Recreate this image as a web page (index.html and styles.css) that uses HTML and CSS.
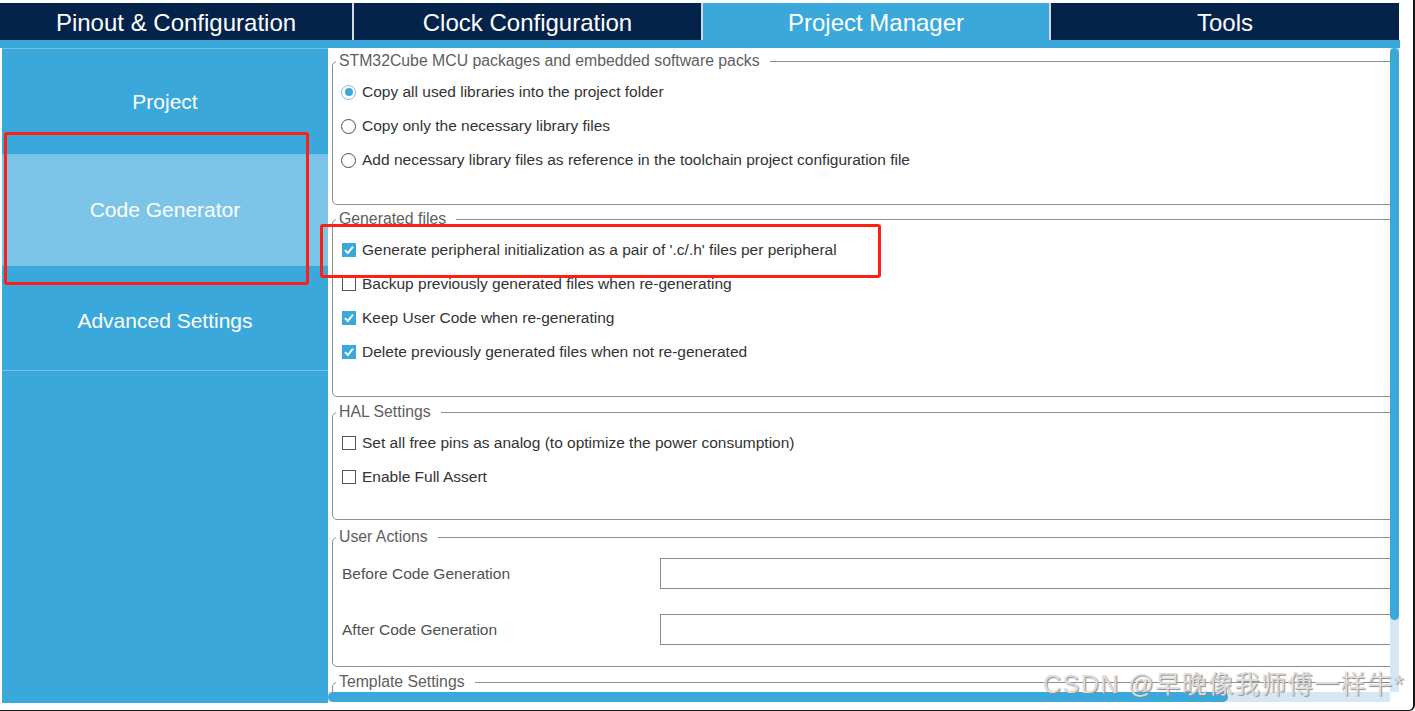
FILE: index.html
```html
<!DOCTYPE html>
<html lang="en">
<head>
    <meta charset="UTF-8">
    <meta name="viewport" content="width=device-width, initial-scale=1.0">
    <title>Project Manager - Code Generator</title>
    <link rel="stylesheet" href="styles.css">
</head>
<body>

    <div class="frame">
        <nav class="tabs">
            <div class="tab">Pinout &amp; Configuration</div>
            <div class="tab">Clock Configuration</div>
            <div class="tab active">Project Manager</div>
            <div class="tab">Tools</div>
        </nav>
        <div class="band"></div>

        <div class="main">
            <aside class="sidebar">
                <div class="nav-item">Project</div>
                <div class="nav-item active">Code Generator</div>
                <div class="nav-item last">Advanced Settings</div>
            </aside>

            <section class="panel">
                <div class="viewport">
                    <fieldset class="group first">
                        <legend>STM32Cube MCU packages and embedded software packs</legend>
                        <label class="option"><span class="radio on"></span>Copy all used libraries into the project folder</label>
                        <label class="option"><span class="radio"></span>Copy only the necessary library files</label>
                        <label class="option"><span class="radio"></span>Add necessary library files as reference in the toolchain project configuration file</label>
                    </fieldset>

                    <fieldset class="group">
                        <legend>Generated files</legend>
                        <label class="option"><span class="check on"><svg viewBox="0 0 13 13"><polyline points="2.8,6.6 5.4,9.3 10.2,3.4"/></svg></span>Generate peripheral initialization as a pair of '.c/.h' files per peripheral</label>
                        <label class="option"><span class="check"></span>Backup previously generated files when re-generating</label>
                        <label class="option"><span class="check on"><svg viewBox="0 0 13 13"><polyline points="2.8,6.6 5.4,9.3 10.2,3.4"/></svg></span>Keep User Code when re-generating</label>
                        <label class="option"><span class="check on"><svg viewBox="0 0 13 13"><polyline points="2.8,6.6 5.4,9.3 10.2,3.4"/></svg></span>Delete previously generated files when not re-generated</label>
                    </fieldset>

                    <fieldset class="group hal">
                        <legend>HAL Settings</legend>
                        <label class="option"><span class="check"></span>Set all free pins as analog (to optimize the power consumption)</label>
                        <label class="option"><span class="check"></span>Enable Full Assert</label>
                    </fieldset>

                    <fieldset class="group actions">
                        <legend>User Actions</legend>
                        <div class="field">
                            <span class="field-label">Before Code Generation</span>
                            <input type="text" class="field-input">
                        </div>
                        <div class="field">
                            <span class="field-label">After Code Generation</span>
                            <input type="text" class="field-input">
                        </div>
                    </fieldset>

                    <fieldset class="group template">
                        <legend>Template Settings</legend>
                    </fieldset>
                </div>
                <div class="vscroll"><div class="thumb"></div></div>
                <div class="hscroll"><div class="thumb"></div></div>
                <div class="corner"></div>
            </section>
        </div>

        <!-- annotation boxes from the screenshot -->
        <div class="mark mark-nav"></div>
        <div class="mark mark-option"></div>
        <div class="watermark">CSDN @早晚像我师傅一样牛*</div>
    </div>

</body>
</html>
```

FILE: styles.css
```css
body {
    margin: 0;
    background-color: white;
    font-family: "Liberation Sans", Arial, sans-serif;
}
.frame {
    position: relative;
    width: 1413px;
    height: 710px;
    border-right: 2px solid #161616;
    border-bottom: 1px solid #161616;
    border-bottom-right-radius: 6px;
    overflow: hidden;
}
.tabs {
    display: grid;
    grid-template-columns: 352px 347px 346px 348px;
    column-gap: 2px;
    width: 1399px;
    margin-top: 3px;
    background-color: #d3d9e0;
}
.tab {
    height: 37px;
    line-height: 39px;
    text-align: center;
    font-size: 24px;
    color: white;
    background-color: #04234a;
}
.tab.active {
    background-color: #3aa8da;
}
.band {
    width: 1400px;
    height: 8px;
    background-color: #3aa8da;
}
.main {
    display: flex;
    width: 1400px;
    height: 655px;
}
.sidebar {
    width: 326px;
    margin-left: 2px;
    background-color: #3aa8da;
}
.nav-item {
    height: 105px;
    border-top: 1px solid #72c2e8;
    display: flex;
    align-items: center;
    justify-content: center;
    font-size: 21px;
    color: white;
}
.nav-item.active {
    height: 110px;
    background-color: #7dc5e8;
}
.nav-item.last {
    height: 99px;
    padding-top: 5px;
    border-bottom: 1px solid #72c2e8;
}
.panel {
    display: grid;
    grid-template-columns: 1062px 9px;
    grid-template-rows: 644px 10px;
    width: 1072px;
    background-color: white;
}
.viewport {
    overflow: hidden;
    padding: 4px 0 0 4px;
}
.group {
    width: 1100px;
    margin: 0 0 6px 0;
    padding: 5px 0 27px 9px;
    border: 1px solid #8a8f96;
    border-radius: 5px;
    box-sizing: border-box;
}
.group.first {
    margin-bottom: 5px;
}
.group.hal {
    padding-bottom: 25px;
    margin-bottom: 8px;
}
.group legend {
    margin-left: -6px;
    padding: 0 10px 0 3px;
    font-size: 15.8px;
    line-height: 18px;
    color: #5e5e5e;
}
.option {
    display: flex;
    align-items: center;
    height: 34px;
    font-size: 15.5px;
    color: #333;
}
.radio {
    box-sizing: border-box;
    width: 15px;
    height: 15px;
    margin: 0 6px 0 -1px;
    border: 1px solid #4d4d4d;
    border-radius: 50%;
    display: flex;
    align-items: center;
    justify-content: center;
}
.radio.on {
    border-color: #7cbadb;
}
.radio.on::after {
    content: "";
    width: 8px;
    height: 8px;
    border-radius: 50%;
    background-color: #3aa8da;
}
.check {
    box-sizing: border-box;
    width: 14px;
    height: 14px;
    margin-right: 6px;
    border: 1px solid #555;
    background-color: white;
}
.check.on {
    border: none;
    background-color: #3aa8da;
}
.check svg {
    display: block;
    width: 14px;
    height: 14px;
    fill: none;
    stroke: white;
    stroke-width: 1.8;
}
.group.actions {
    padding-top: 12px;
    padding-bottom: 21px;
    margin-bottom: 6px;
}
.group.template {
    height: 120px;
}
.field {
    display: grid;
    grid-template-columns: 318px 1fr;
    align-items: center;
    margin-bottom: 25px;
}
.field:last-child {
    margin-bottom: 0;
}
.field-label {
    font-size: 15.5px;
    color: #505050;
}
.field-input {
    box-sizing: border-box;
    height: 31px;
    margin: 0;
    border: 1px solid #8c8c8c;
    border-radius: 0;
    background-color: white;
}
.vscroll {
    background-color: #d5e7f4;
}
.vscroll .thumb {
    height: 572px;
    border-radius: 5px;
    background-color: #3aa8da;
}
.hscroll {
    background-color: #d5e7f4;
}
.hscroll .thumb {
    width: 900px;
    height: 10px;
    border-radius: 5px;
    background-color: #3aa8da;
}
.mark {
    position: absolute;
    box-sizing: border-box;
    border: 3px solid #ff1e14;
    border-radius: 3px;
}
.mark-nav {
    left: 4px;
    top: 132px;
    width: 305px;
    height: 153px;
}
.mark-option {
    left: 320px;
    top: 224px;
    width: 561px;
    height: 54px;
}
.watermark {
    position: absolute;
    left: 1043px;
    top: 664px;
    font-family: "Liberation Sans", "Noto Sans CJK SC", sans-serif;
    font-size: 25px;
    letter-spacing: 1.5px;
    color: #dcdcdc;
    text-shadow: 1px 1px 1px #8d8d8d;
    white-space: nowrap;
}
```
